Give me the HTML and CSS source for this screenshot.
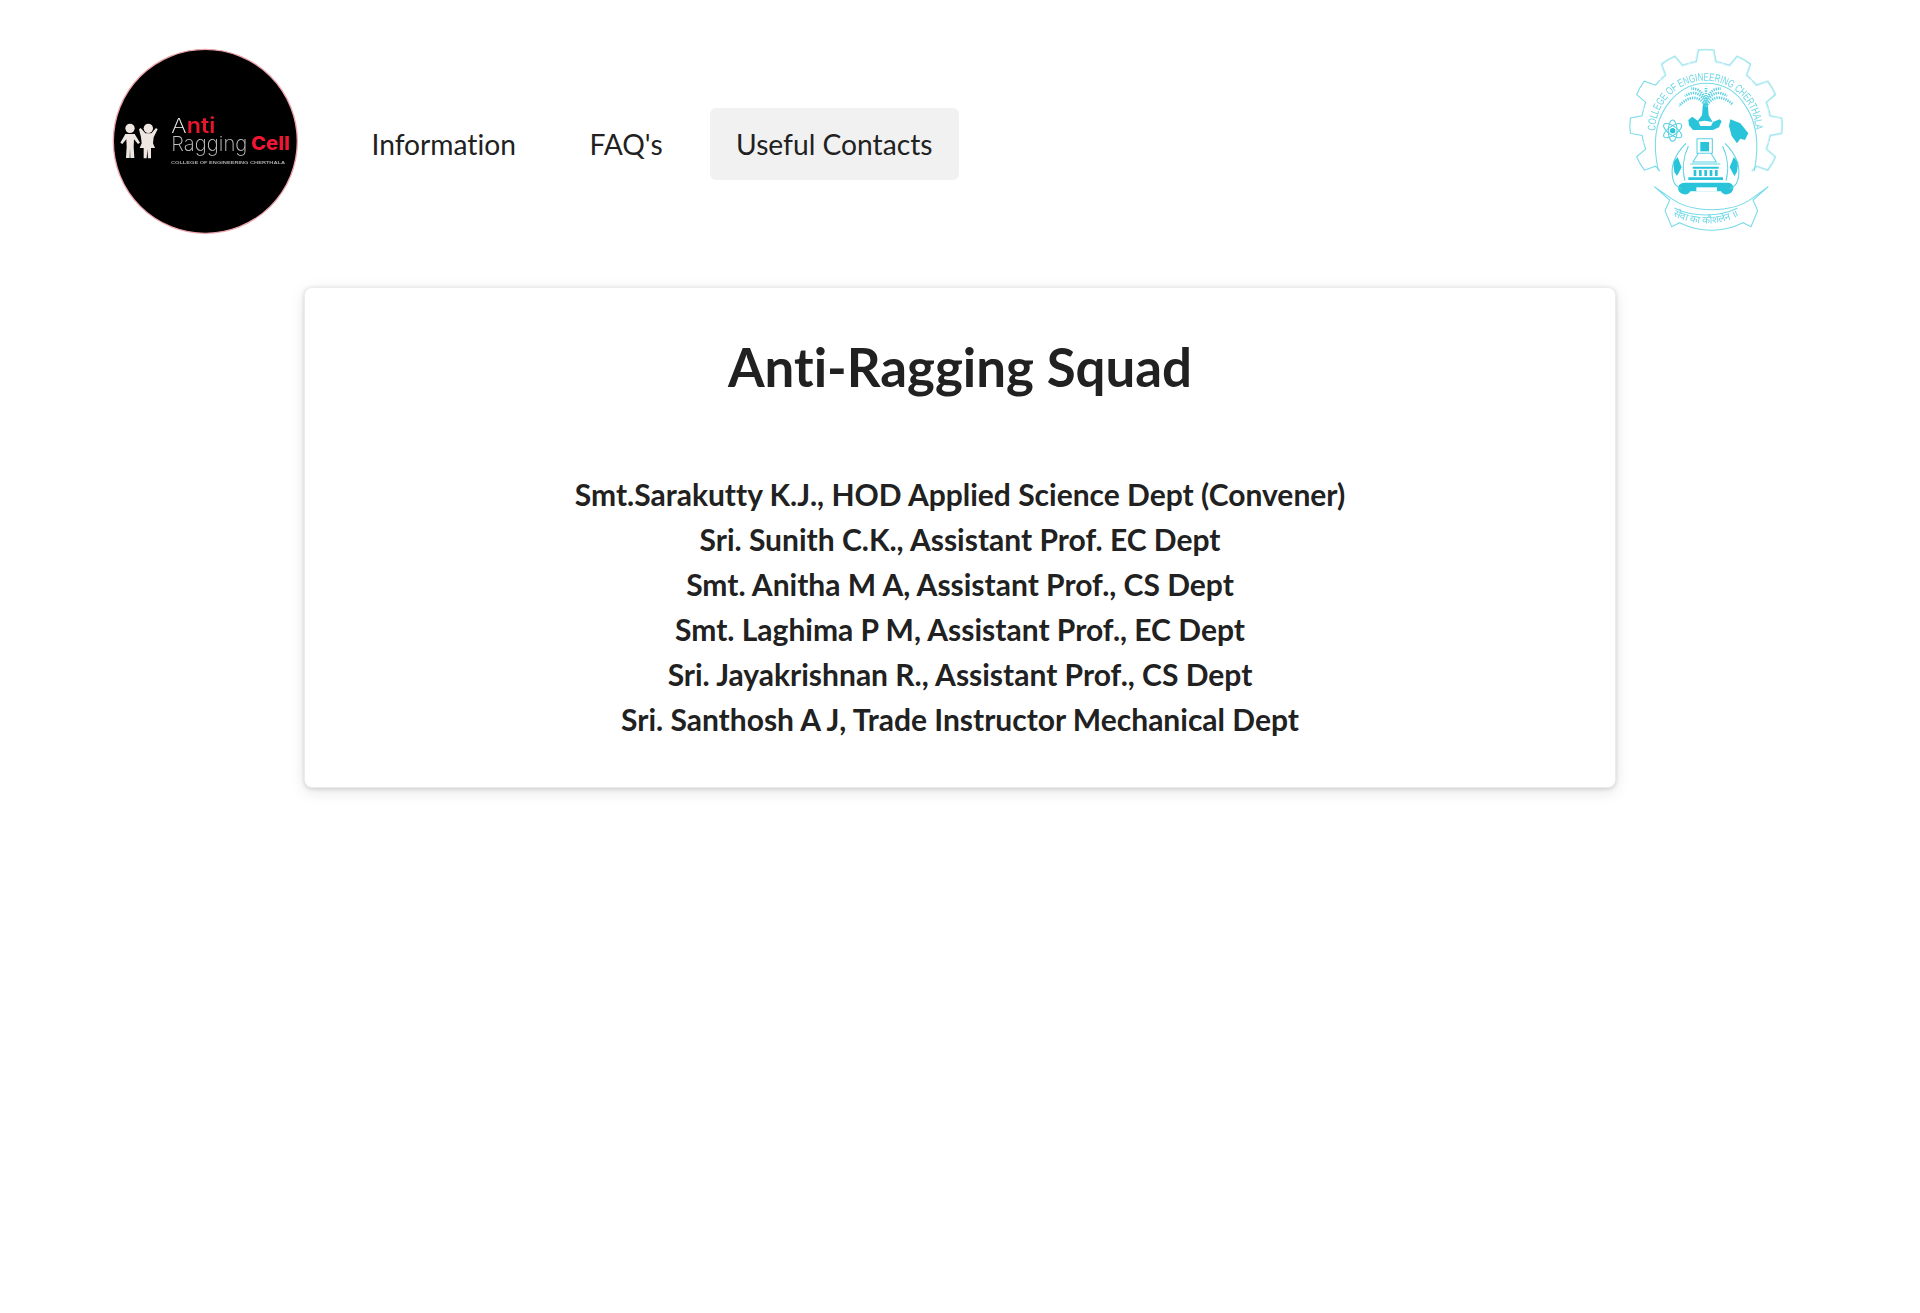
FILE: index.html
```html
<!DOCTYPE html>
<html lang="en">
<head>
<meta charset="utf-8">
<title>Anti-Ragging Squad</title>
<link rel="stylesheet" href="styles.css">
</head>
<body>
<header class="header">
  <svg class="logo-left" viewBox="0 0 630 600" role="img" aria-label="Anti Ragging Cell">
    <defs><filter id="b1"><feGaussianBlur stdDeviation="1.8"/></filter></defs>
    <circle cx="316" cy="304" r="276" fill="#000" stroke="#eda4ac" stroke-width="4"/>
    <g filter="url(#b1)">
      <g fill="#efe6e2">
        <circle cx="90" cy="265" r="14"/>
        <path d="M76 282h28l16 26-6 4-12-14-1 22 2 34H91l-1-30-1 30H78l2-34-1-22-12 14-6-4z"/>
        <circle cx="145" cy="265" r="14"/>
        <path d="M117 268l5-4 14 16h18l14-16 5 4-12 24-2 18 6 14h-12v31h-9l-2-28-2 28h-9v-31h-12l6-14-2-18z"/>
      </g>
      <text x="214" y="278" class="logo-anti" textLength="132" lengthAdjust="spacingAndGlyphs"><tspan class="logo-anti-a">A</tspan>nti</text>
      <text x="214" y="332" class="logo-ragging" textLength="228" lengthAdjust="spacingAndGlyphs">Ragging</text>
      <text x="454" y="330" class="logo-cell" textLength="116" lengthAdjust="spacingAndGlyphs">Cell</text>
      <text x="213" y="372" class="logo-small" textLength="342" lengthAdjust="spacingAndGlyphs">COLLEGE OF ENGINEERING CHERTHALA</text>
    </g>
  </svg>
  <nav class="nav">
    <a class="nav-link" href="#">Information</a>
    <a class="nav-link" href="#">FAQ's</a>
    <a class="nav-link active" href="#">Useful Contacts</a>
  </nav>
  <svg class="logo-right" viewBox="0 0 540 600" role="img" aria-label="College of Engineering Cherthala seal">
    <defs>
      <filter id="b2"><feGaussianBlur stdDeviation="1.2"/></filter>
      <path id="arc" d="M133 272A150 150 0 0 1 433 272"/>
      <path id="arc2" d="M178 522C240 560 330 560 392 522"/>
      <path id="tooth" d="M-49.2-187.5A194 194 0 0 1-29.7-191.7L-23.2-226.8Q0-230 23.2-226.8L29.7-191.7A194 194 0 0 1 49.2-187.5"/>
    </defs>
    <g filter="url(#b2)">
      <g fill="none" stroke="#79dbe9" stroke-width="3.2">
        <g transform="translate(285 257)">
          <use href="#tooth"/>
          <use href="#tooth" transform="rotate(30)"/>
          <use href="#tooth" transform="rotate(60)"/>
          <use href="#tooth" transform="rotate(90)"/>
          <use href="#tooth" transform="rotate(120)"/>
          <use href="#tooth" transform="rotate(-30)"/>
          <use href="#tooth" transform="rotate(-60)"/>
          <use href="#tooth" transform="rotate(-90)"/>
          <use href="#tooth" transform="rotate(-120)"/>
        </g>
        <path d="M142 392C126 320 132 250 165 200 200 150 245 130 285 130 330 130 375 150 405 200 438 250 444 320 430 392"/>
        <path d="M130 440l46 40-14 32 20 48 24-12c60 30 130 30 190 0l24 12 20-48-14-32 46-40-50 36c-60 44-180 44-240 0z" fill="#fff"/>
        <path d="M190 504c56 28 134 28 190 0"/>
      </g>
      <text class="seal-text"><textPath href="#arc" textLength="468" lengthAdjust="spacingAndGlyphs">COLLEGE OF ENGINEERING CHERTHALA</textPath></text>
      <g fill="#2cc4da">
        <path d="M276 190h14l3 36 12 20-24-4-24 4 16-20z"/>
        <path d="M232 240l12-10 18 14 6 14 32 0 6-12 20-8 6 6-8 18-18 8h-60l-12-14z"/>
        <path d="M358 238l30 12 24 30-10 20-14-4-10 14-16-22-8-30z"/>
        <circle cx="185" cy="272" r="8"/>
        <path d="M268 306h26v28h-26z"/>
        <path d="M245 380h78v6h-78zM248 390h8v18h-8zM264 390h8v18h-8zM280 390h8v18h-8zM296 390h8v18h-8zM312 390h8v18h-8zM232 412h104v8H232z"/>
        <path d="M222 428h128c20 0 22 22 8 32-10 6-24 4-28-6h-92c-4 10-18 12-28 6-14-10-12-32 12-32z"/>
        <path d="M186 366l14-14 12 30-14 26-8-12zM382 366l-14-14-12 30 14 26 8-12z"/>
      </g>
      <path d="M256 442h62v12h-62z" fill="#fff"/>
      <g fill="none" stroke="#5cd2e4" stroke-width="3.2">
        <g stroke-width="8" stroke-dasharray="4 3">
          <path d="M285 200C265 165 235 165 204 198"/>
          <path d="M285 200C305 165 335 165 366 194"/>
          <path d="M285 190C270 160 250 150 222 168"/>
          <path d="M285 190C300 160 320 150 348 168"/>
          <path d="M285 185C275 155 262 145 240 146"/>
          <path d="M285 185C295 155 308 145 330 146"/>
          <path d="M285 190V140"/>
        </g>
        <ellipse cx="185" cy="272" rx="32" ry="13" transform="rotate(35 185 272)"/>
        <ellipse cx="185" cy="272" rx="32" ry="13" transform="rotate(-35 185 272)"/>
        <ellipse cx="185" cy="272" rx="13" ry="32"/>
        <path d="M258 296h46v44h-46zM262 340h38l16 26h-70zM238 372h90"/>
        <path d="M225 310c-30 30-50 70-38 112 4 12 12 20 24 24M232 318c-14 30-20 70-10 104M342 310c30 30 50 70 38 112-4 12-12 20-24 24M335 318c14 30 20 70 10 104"/>
      </g>
      <text class="seal-motto"><textPath href="#arc2" startOffset="50%" text-anchor="middle">सेवा का कौशलेन ॥</textPath></text>
    </g>
  </svg>
</header>
<main class="card">
  <h1 class="title">Anti-Ragging Squad</h1>
  <ul class="members">
    <li>Smt.Sarakutty K.J., HOD Applied Science Dept (Convener)</li>
    <li>Sri. Sunith C.K., Assistant Prof. EC Dept</li>
    <li>Smt. Anitha M A, Assistant Prof., CS Dept</li>
    <li>Smt. Laghima P M, Assistant Prof., EC Dept</li>
    <li>Sri. Jayakrishnan R., Assistant Prof., CS Dept</li>
    <li>Sri. Santhosh A J, Trade Instructor Mechanical Dept</li>
  </ul>
</main>
</body>
</html>
```
FILE: styles.css
```css
* { box-sizing: border-box; }
html, body { margin: 0; padding: 0; }
body {
  min-height: 1313px;
  background: #fff;
  color: #212121;
  font-family: Lato, "Liberation Sans", sans-serif;
  font-variant-ligatures: none;
}
.header {
  display: flex;
  align-items: flex-start;
  height: 287px;
  padding: 40px 129px 0 100px;
}
.logo-left { width: 210px; height: 200px; flex: none; }
.nav {
  display: flex;
  flex: 1;
  gap: 21.5px;
  margin: 68px 0 0 35.5px;
}
.nav-link {
  display: block;
  height: 72px;
  padding: 0 26px;
  border-radius: 6px;
  color: #212121;
  font-size: 28.2px;
  line-height: 72px;
  text-decoration: none;
}
.nav-link.active { background: #f1f1f1; }
.logo-right { width: 180px; height: 200px; flex: none; }
.logo-anti { font: 600 62px Inter, "Liberation Sans", sans-serif; fill: #e8152b; }
.logo-anti-a { font-weight: 200; fill: #f2f2f2; }
.logo-ragging { font: 200 62px Inter, "Liberation Sans", sans-serif; fill: #c4c4c4; }
.logo-cell { font: 800 58px Inter, "Liberation Sans", sans-serif; fill: #ee1530; }
.logo-small { font: 700 12px "Liberation Sans", sans-serif; fill: #a9a9a9; }
.seal-text { font: 400 33px "Liberation Sans", sans-serif; fill: #6ad6e6; }
.seal-motto { font: 400 30px "Noto Sans", "Liberation Sans", sans-serif; fill: #6ad6e6; }
.card {
  width: 1312px;
  height: 501px;
  margin-left: 304px;
  padding: 44px 0 0;
  border: 1px solid #ececec;
  border-radius: 8px;
  background: #fff;
  box-shadow: 0 1px 4px rgba(0, 0, 0, 0.14), 0 4px 16px rgba(0, 0, 0, 0.1);
  text-align: center;
}
.title {
  margin: 0;
  color: #212121;
  font-size: 52.8px;
  font-weight: 700;
  line-height: 70px;
}
.members {
  margin: 70px 0 0;
  padding: 0;
  font-size: 30px;
  font-weight: 700;
  line-height: 45px;
  list-style: none;
}
```
